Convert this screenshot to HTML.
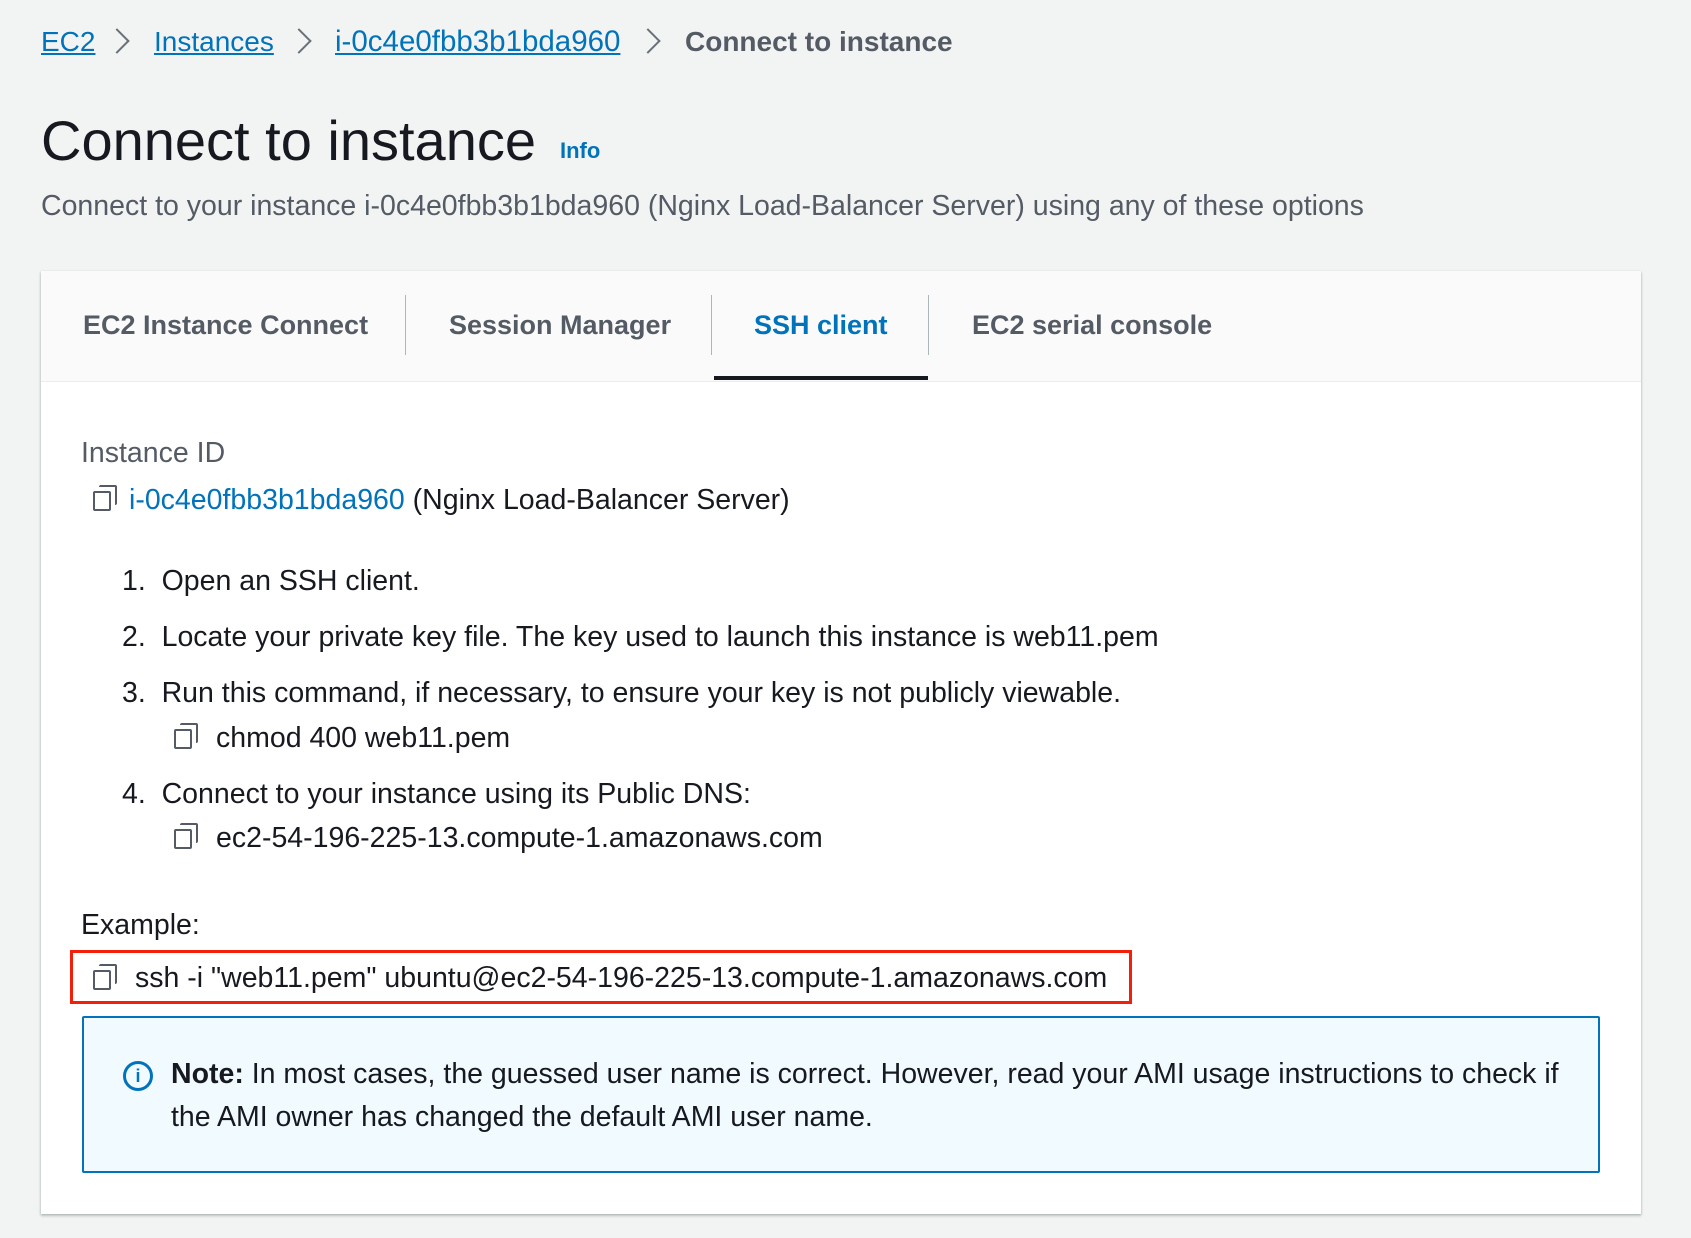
<!DOCTYPE html>
<html><head><meta charset="utf-8"><style>
*{margin:0;padding:0;box-sizing:border-box}
body{width:1691px;height:1238px;background:#f2f3f3;font-family:"Liberation Sans",sans-serif;color:#16191f;position:relative;overflow:hidden}
.a{position:absolute;white-space:nowrap}
a{color:#0073bb}
.bc{top:26px;font-size:28px;color:#0073bb}
.bc a{text-decoration:underline}
.chev{position:absolute;top:32px;width:18px;height:18px;border-right:2.5px solid #687078;border-top:2.5px solid #687078;transform:rotate(45deg)}
.card{position:absolute;left:41px;top:271px;width:1600px;height:943px;background:#fff;box-shadow:0 1px 2px #aab7b8,0 2px 3px rgba(0,0,0,.15)}
.tabs{position:absolute;left:0;top:0;width:1600px;height:111px;background:#fafafa;border-bottom:1px solid #eaeded}
.tab{position:absolute;top:39px;font-size:27px;font-weight:bold;color:#545b64}
.div{position:absolute;top:24px;width:1px;height:60px;background:#aab7b8}
.t{font-size:28.5px;position:absolute;white-space:nowrap}
.copy{position:absolute;width:18px;height:20px;border:2.5px solid #545b64;border-radius:2px;background:#fff}
.copy:before{content:"";position:absolute;left:4px;top:-8px;width:16px;height:18px;border:2.5px solid #545b64;border-radius:2px;border-left:none;border-bottom:none}
</style></head><body>
<div class="a bc" style="left:41px"><a>EC2</a></div>
<div class="chev" style="left:108px"></div>
<div class="a bc" style="left:154px"><a>Instances</a></div>
<div class="chev" style="left:290px"></div>
<div class="a bc" style="left:335px;font-size:29.5px;top:25px"><a>i-0c4e0fbb3b1bda960</a></div>
<div class="chev" style="left:639px"></div>
<div class="a bc" style="left:685px;color:#545b64;font-weight:bold">Connect to instance</div>
<div class="a" style="left:41px;top:108px;font-size:56px;color:#16191f">Connect to instance</div>
<div class="a" style="left:560px;top:138px;font-size:22px;font-weight:bold;color:#0073bb">Info</div>
<div class="a" style="left:41px;top:190px;font-size:28.5px;color:#545b64">Connect to your instance i-0c4e0fbb3b1bda960 (Nginx Load-Balancer Server) using any of these options</div>
<div class="card">
 <div class="tabs">
  <div class="tab" style="left:42px">EC2 Instance Connect</div>
  <div class="div" style="left:364px"></div>
  <div class="tab" style="left:408px">Session Manager</div>
  <div class="div" style="left:670px"></div>
  <div class="tab" style="left:713px;color:#0073bb">SSH client</div>
  <div class="div" style="left:887px"></div>
  <div class="tab" style="left:931px">EC2 serial console</div>
  <div style="position:absolute;left:673px;top:105px;width:214px;height:4px;background:#16191f"></div>
 </div>
 <div class="t" style="left:40px;top:166px;color:#545b64">Instance ID</div>
 <div class="copy" style="left:52px;top:220px"></div>
 <div class="t" style="left:88px;top:213px"><span style="color:#0073bb">i-0c4e0fbb3b1bda960</span> (Nginx Load-Balancer Server)</div>
 <div class="t" style="left:81px;top:294px">1.&nbsp; Open an SSH client.</div>
 <div class="t" style="left:81px;top:350px">2.&nbsp; Locate your private key file. The key used to launch this instance is web11.pem</div>
 <div class="t" style="left:81px;top:406px">3.&nbsp; Run this command, if necessary, to ensure your key is not publicly viewable.</div>
 <div class="copy" style="left:133px;top:458px"></div>
 <div class="t" style="left:175px;top:451px">chmod 400 web11.pem</div>
 <div class="t" style="left:81px;top:507px">4.&nbsp; Connect to your instance using its Public DNS:</div>
 <div class="copy" style="left:133px;top:558px"></div>
 <div class="t" style="left:175px;top:551px">ec2-54-196-225-13.compute-1.amazonaws.com</div>
 <div class="t" style="left:40px;top:638px">Example:</div>
 <div style="position:absolute;left:29px;top:679px;width:1062px;height:54px;border:3px solid #f41f0a"></div>
 <div class="copy" style="left:52px;top:699px"></div>
 <div class="t" style="left:94px;top:691px">ssh -i "web11.pem" ubuntu@ec2-54-196-225-13.compute-1.amazonaws.com</div>
 <div style="position:absolute;left:41px;top:745px;width:1518px;height:157px;background:#f1faff;border:2px solid #0073bb;border-radius:2px"></div>
 <div style="position:absolute;left:82px;top:790px;width:30px;height:30px;border:3px solid #0073bb;border-radius:50%;color:#0073bb;font-weight:bold;font-size:18px;text-align:center;line-height:24px">i</div>
 <div class="t" style="left:130px;top:782px;line-height:43px;white-space:normal;width:1410px">
 <b>Note:</b> In most cases, the guessed user name is correct. However, read your AMI usage instructions to check if the AMI owner has changed the default AMI user name.</div>
</div>
</body></html>
